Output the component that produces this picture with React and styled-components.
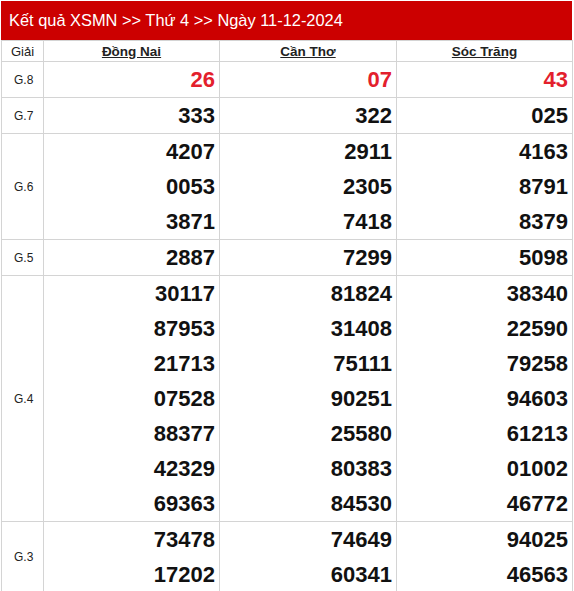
import React from 'react';
import styled, { createGlobalStyle } from 'styled-components';

const GlobalStyle = createGlobalStyle`
  body { margin: 0; background: #fff; font-family: "Liberation Sans", Arial, sans-serif; }
`;

const Wrapper = styled.div`
  padding: 1px 0 0 1px;
  width: 572px;
`;

const TitleBar = styled.div`
  background: #cc0000;
  color: #fff;
  height: 39px;
  line-height: 39px;
  padding-left: 8px;
  font-size: 16.4px;
  width: 563px;
`;

const ResultTable = styled.table`
  border-collapse: collapse;
  width: 572px;
  table-layout: fixed;
  td, th { border: 1px solid #d4d4d4; padding: 0; }
`;

const HeadCell = styled.th`
  height: 20px;
  font-size: ${p => (p.$plain ? '13px' : '13.5px')};
  font-weight: ${p => (p.$plain ? 'normal' : 'bold')};
  color: #222;
  text-align: center;
  text-decoration: ${p => (p.$plain ? 'none' : 'underline')};
`;

const PrizeCell = styled.td`
  font-size: 12px;
  color: #222;
  padding-left: 12px !important;
`;

const NumCell = styled.td`
  text-align: right;
  padding-right: 4px !important;
`;

const Num = styled.div`
  font-size: 22px;
  font-weight: bold;
  line-height: 35px;
  color: ${p => (p.$red ? '#e3202c' : '#111')};
`;

const provinces = ['Đồng Nai', 'Cần Thơ', 'Sóc Trăng'];

const prizes = [
  { name: 'G.8', red: true, nums: [['26'], ['07'], ['43']] },
  { name: 'G.7', nums: [['333'], ['322'], ['025']] },
  { name: 'G.6', nums: [['4207', '0053', '3871'], ['2911', '2305', '7418'], ['4163', '8791', '8379']] },
  { name: 'G.5', nums: [['2887'], ['7299'], ['5098']] },
  {
    name: 'G.4',
    nums: [
      ['30117', '87953', '21713', '07528', '88377', '42329', '69363'],
      ['81824', '31408', '75111', '90251', '25580', '80383', '84530'],
      ['38340', '22590', '79258', '94603', '61213', '01002', '46772'],
    ],
  },
  { name: 'G.3', nums: [['73478', '17202'], ['74649', '60341'], ['94025', '46563']] },
];

export default function App() {
  return (
    <Wrapper>
      <GlobalStyle />
      <TitleBar>Kết quả XSMN &gt;&gt; Thứ 4 &gt;&gt; Ngày 11-12-2024</TitleBar>
      <ResultTable>
        <colgroup>
          <col style={{ width: 42 }} />
          <col style={{ width: 176 }} />
          <col style={{ width: 177 }} />
          <col style={{ width: 176 }} />
        </colgroup>
        <thead>
          <tr>
            <HeadCell $plain>Giải</HeadCell>
            {provinces.map(p => <HeadCell key={p}>{p}</HeadCell>)}
          </tr>
        </thead>
        <tbody>
          {prizes.map(prize => (
            <tr key={prize.name}>
              <PrizeCell>{prize.name}</PrizeCell>
              {prize.nums.map((col, i) => (
                <NumCell key={i}>
                  {col.map(n => <Num key={n} $red={prize.red}>{n}</Num>)}
                </NumCell>
              ))}
            </tr>
          ))}
        </tbody>
      </ResultTable>
    </Wrapper>
  );
}
